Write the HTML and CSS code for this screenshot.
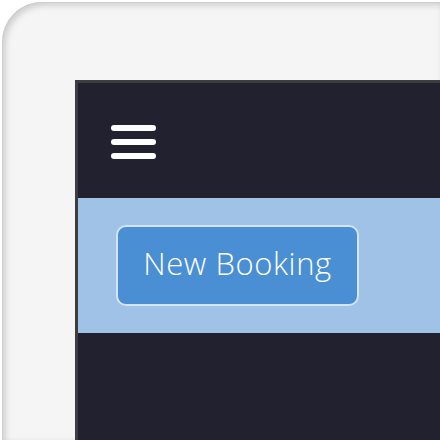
FILE: index.html
```html
<!DOCTYPE html>
<html>
<head>
<meta charset="utf-8">
<link rel="stylesheet" href="styles.css">
</head>
<body>
<div class="device">
  <div class="screen">
    <div class="header">
      <div class="menu" aria-label="Menu">
        <span class="bar"></span>
        <span class="bar"></span>
        <span class="bar"></span>
      </div>
    </div>
    <div class="band">
      <button class="btn">New Booking</button>
    </div>
    <div class="content"></div>
  </div>
</div>
</body>
</html>
```

FILE: styles.css
```css
html, body {
  margin: 0;
  padding: 0;
  background: #ffffff;
  overflow: hidden;
}
.device {
  margin: 2px 0 0 2px;
  width: 438px;
  height: 438px;
  box-sizing: border-box;
  padding: 78px 0 0 73px;
  background: #f5f5f5;
  border-radius: 40px 0 0 0;
  box-shadow: inset 1px 1px 0 #cfcfcf, inset 3px 3px 7px rgba(0, 0, 0, 0.18);
}
.screen {
  border-top: 3px solid #3d3d3f;
  border-left: 3px solid #3d3d3f;
  background: #212130;
  height: 100%;
  box-sizing: border-box;
  display: flex;
  flex-direction: column;
}
.header {
  height: 115px;
  box-sizing: border-box;
  padding: 42px 0 0 33px;
}
.menu {
  width: 45px;
  display: flex;
  flex-direction: column;
  gap: 8px;
}
.bar {
  display: block;
  height: 6px;
  border-radius: 3px;
  background: #ffffff;
}
.band {
  height: 135px;
  box-sizing: border-box;
  background: #a0c2e6;
  padding: 27px 0 0 38px;
}
.btn {
  width: 243px;
  height: 81px;
  box-sizing: border-box;
  border: 2px solid #d2e4f6;
  border-radius: 10px;
  background: #4a8fd4;
  color: #ffffff;
  font-family: "Open Sans", "Lato", sans-serif;
  font-weight: 300;
  font-size: 31px;
  letter-spacing: 0.6px;
  line-height: 1;
  padding: 0 0 5px 0;
  cursor: pointer;
}
.content {
  flex: 1;
}
```
